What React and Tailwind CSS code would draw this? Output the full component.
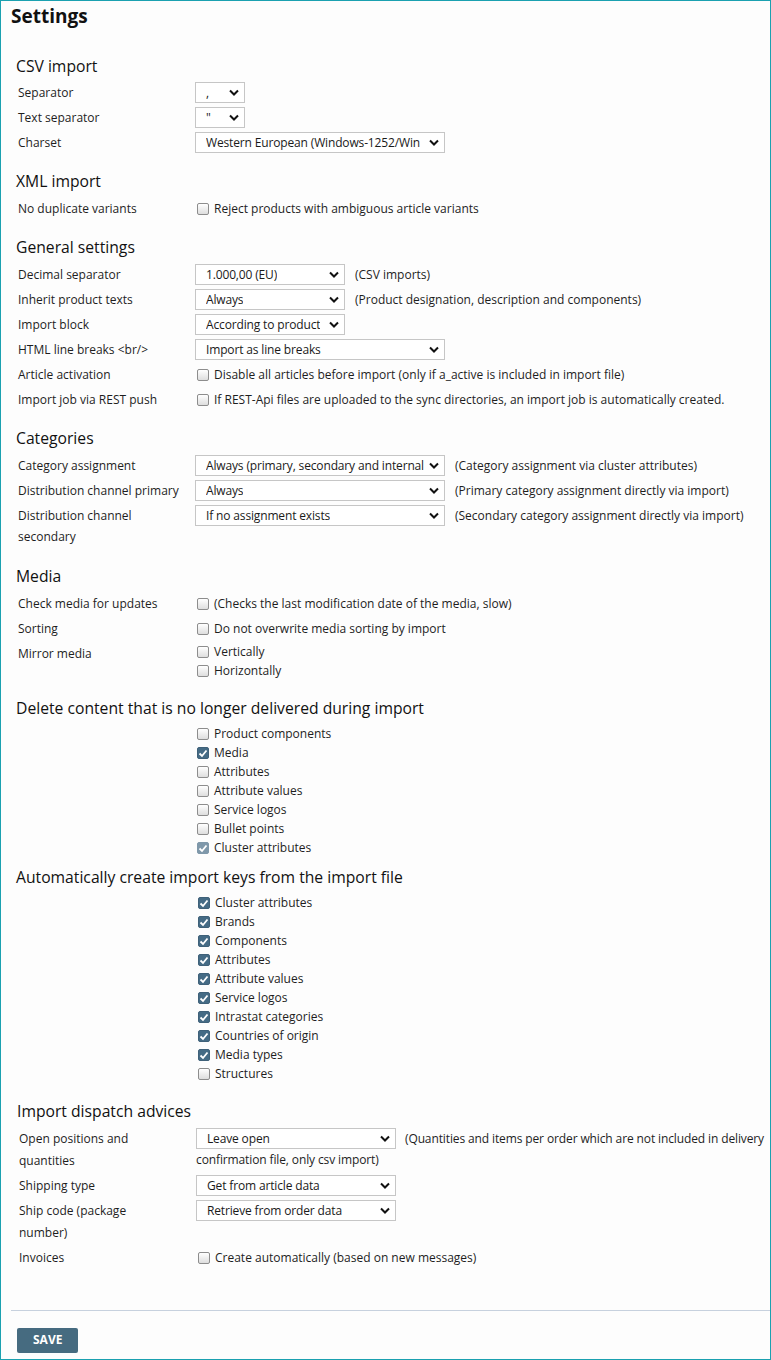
import React from "react";

const font = { fontFamily: '"Open Sans", "Liberation Sans", sans-serif' };

function Chevron() {
  return (
    <svg width="10" height="7" viewBox="0 0 10 7" className="shrink-0">
      <path d="M1 1.5 L5 5.5 L9 1.5" fill="none" stroke="#111" strokeWidth="2" />
    </svg>
  );
}

function Select({ value, width }) {
  return (
    <span
      className="inline-flex h-[21px] items-center justify-between border border-[#c6c6c6] bg-white pl-[10px] pr-[5px] align-top text-[12px] leading-[19px] tracking-[-0.15px] text-[#1a1a1a]"
      style={{ width }}
    >
      <span className="overflow-hidden whitespace-nowrap">{value}</span>
      <Chevron />
    </span>
  );
}

function Box({ checked, light }) {
  if (checked) {
    return (
      <span
        className={`mt-[1px] inline-flex h-[12px] w-[12px] shrink-0 items-center justify-center rounded-[2px] border ${
          light ? "border-[#7f98aa] bg-[#7f98aa]" : "border-[#3f6179] bg-[#456b85]"
        }`}
      >
        <svg width="10" height="9" viewBox="0 0 10 9">
          <path d="M1.5 4.5 L4 7 L8.5 1.5" fill="none" stroke="#fff" strokeWidth="1.8" />
        </svg>
      </span>
    );
  }
  return (
    <span className="mt-[1px] inline-block h-[12px] w-[12px] shrink-0 rounded-[2px] border border-[#8d8d8d] bg-gradient-to-b from-white to-[#dedede]" />
  );
}

function Check({ label, checked, light }) {
  return (
    <div className="flex h-[19px] items-center gap-[5px] pl-[2px] text-[12px] leading-[19px]">
      <Box checked={checked} light={light} />
      <span>{label}</span>
    </div>
  );
}

function Heading({ children, className = "" }) {
  return (
    <h2 className={`h-[24px] pl-[4px] text-[15.7px] leading-[24px] text-[#111] ${className}`}>
      {children}
    </h2>
  );
}

function Row({ label, children, tall }) {
  return (
    <div className="flex items-start text-[12px]">
      <div
        className={`w-[183px] shrink-0 py-[2px] pl-[6px] pr-[15px] ${tall ? "leading-[21.5px]" : "leading-[21px]"}`}
      >
        {label}
      </div>
      <div className="min-w-0 flex-1 py-[2px] leading-[21px]">{children}</div>
    </div>
  );
}

function Note({ children }) {
  return <span className="ml-[10px] align-top">{children}</span>;
}

function CheckLine({ children }) {
  return (
    <div className="flex h-[21px] items-center gap-[5px] pl-[2px] whitespace-nowrap">
      <Box />
      <span>{children}</span>
    </div>
  );
}

const deleteItems = [
  ["Product components", false],
  ["Media", true],
  ["Attributes", false],
  ["Attribute values", false],
  ["Service logos", false],
  ["Bullet points", false],
  ["Cluster attributes", true, true],
];

const keyItems = [
  ["Cluster attributes", true],
  ["Brands", true],
  ["Components", true],
  ["Attributes", true],
  ["Attribute values", true],
  ["Service logos", true],
  ["Intrastat categories", true],
  ["Countries of origin", true],
  ["Media types", true],
  ["Structures", false],
];

export default function App() {
  return (
    <div
      className="h-[1360px] w-[771px] overflow-hidden border border-[#1ba1b0] bg-[#fdfdfd] text-[#1e1e1e]"
      style={font}
    >
      <h1 className="pl-[10px] pt-[2px] text-[19px] font-bold leading-[26px] text-[#111]">Settings</h1>

      <div className="pl-[11px] pr-[1px]">
        <Heading className="mt-[25px] mb-[2px]">CSV import</Heading>
        <Row label="Separator">
          <Select value="," width={50} />
        </Row>
        <Row label="Text separator">
          <Select value={'"'} width={50} />
        </Row>
        <Row label="Charset">
          <Select value="Western European (Windows-1252/Win" width={250} />
        </Row>

        <Heading className="mt-[14px] mb-[3px]">XML import</Heading>
        <Row label="No duplicate variants">
          <CheckLine>Reject products with ambiguous article variants</CheckLine>
        </Row>

        <Heading className="mt-[14px] mb-[3px]">General settings</Heading>
        <Row label="Decimal separator">
          <Select value="1.000,00 (EU)" width={150} />
          <Note>(CSV imports)</Note>
        </Row>
        <Row label="Inherit product texts">
          <Select value="Always" width={150} />
          <Note>(Product designation, description and components)</Note>
        </Row>
        <Row label="Import block">
          <Select value="According to product" width={150} />
        </Row>
        <Row label="HTML line breaks <br/>">
          <Select value="Import as line breaks" width={250} />
        </Row>
        <Row label="Article activation">
          <CheckLine>Disable all articles before import (only if a_active is included in import file)</CheckLine>
        </Row>
        <Row label="Import job via REST push">
          <CheckLine>
            If REST-Api files are uploaded to the sync directories, an import job is automatically created.
          </CheckLine>
        </Row>

        <Heading className="mt-[14px] mb-[3px]">Categories</Heading>
        <Row label="Category assignment">
          <Select value="Always (primary, secondary and internal" width={250} />
          <Note>(Category assignment via cluster attributes)</Note>
        </Row>
        <Row label="Distribution channel primary">
          <Select value="Always" width={250} />
          <Note>(Primary category assignment directly via import)</Note>
        </Row>
        <Row label="Distribution channel secondary">
          <Select value="If no assignment exists" width={250} />
          <Note>(Secondary category assignment directly via import)</Note>
        </Row>

        <Heading className="mt-[15px] mb-[3px]">Media</Heading>
        <Row label="Check media for updates">
          <CheckLine>(Checks the last modification date of the media, slow)</CheckLine>
        </Row>
        <Row label="Sorting">
          <CheckLine>Do not overwrite media sorting by import</CheckLine>
        </Row>
        <Row label="Mirror media">
          <div className="-mt-[1px]">
            <Check label="Vertically" />
            <Check label="Horizontally" />
          </div>
        </Row>

        <Heading className="mt-[14px] mb-[4px]">Delete content that is no longer delivered during import</Heading>
        <div className="pl-[183px]">
          {deleteItems.map(([label, checked, light]) => (
            <Check key={label} label={label} checked={checked} light={light} />
          ))}
        </div>

        <Heading className="mt-[8px] mb-[4px]">Automatically create import keys from the import file</Heading>
        <div className="pl-[184px]">
          {keyItems.map(([label, checked]) => (
            <Check key={label} label={label} checked={checked} />
          ))}
        </div>

        <div className="pl-[1px]">
          <Heading className="mt-[16px] mb-[3px]">Import dispatch advices</Heading>
          <Row label="Open positions and quantities" tall>
            <Select value="Leave open" width={200} />
            <span className="ml-[9px] tracking-[-0.12px]">
              (Quantities and items per order which are not included in delivery confirmation file, only csv import)
            </span>
          </Row>
          <Row label="Shipping type">
            <Select value="Get from article data" width={200} />
          </Row>
          <Row
            tall
            label={
              <>
                Ship code (package
                <br />
                number)
              </>
            }
          >
            <Select value="Retrieve from order data" width={200} />
          </Row>
          <Row label="Invoices">
            <CheckLine>Create automatically (based on new messages)</CheckLine>
          </Row>
        </div>
      </div>

      <div className="ml-[10px] mt-[40px] border-t border-[#c7d1de]" />
      <div className="pl-[16px] pt-[15px]">
        <button className="h-[25px] rounded-[2px] bg-[#466b80] px-[16px] text-[12px] font-bold text-white">
          SAVE
        </button>
      </div>
    </div>
  );
}
